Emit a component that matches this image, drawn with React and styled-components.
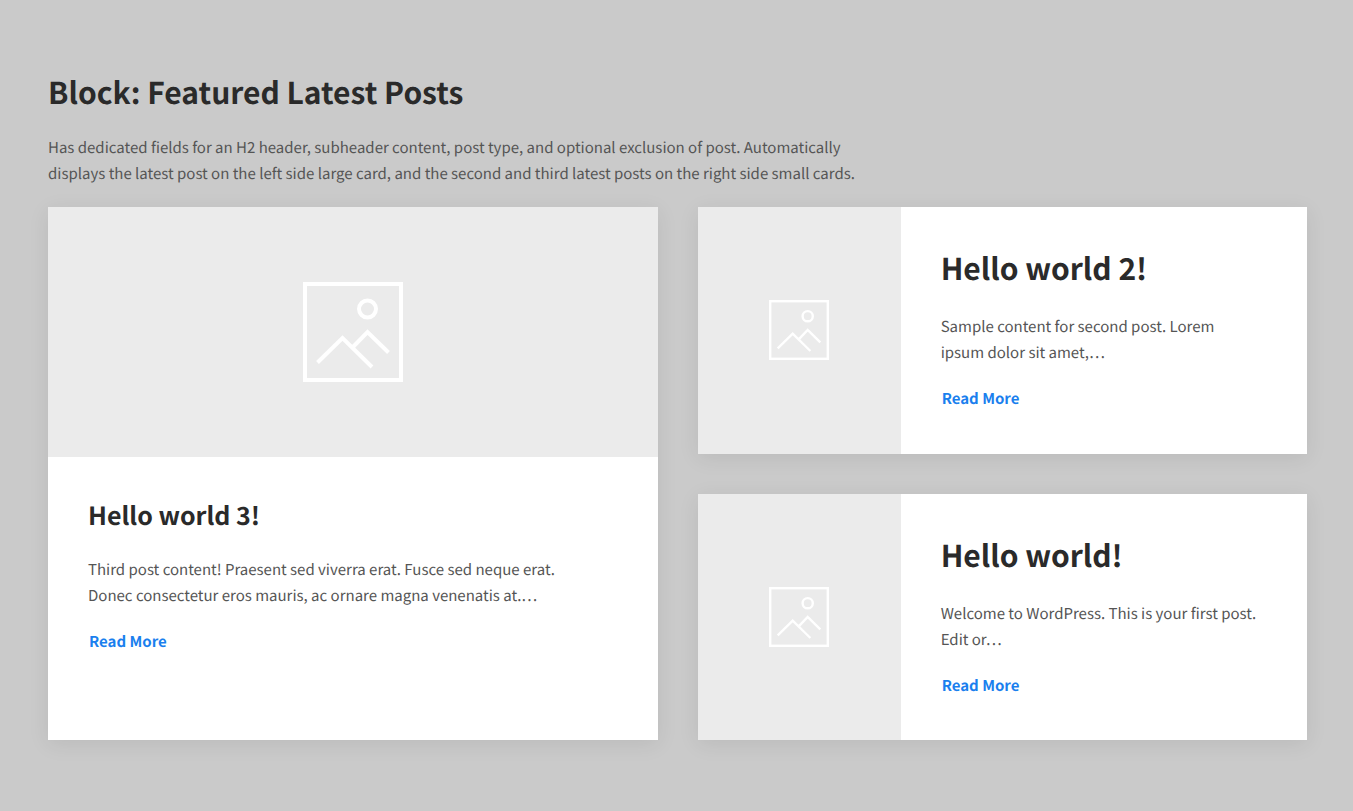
import React from "react";
import styled, { createGlobalStyle } from "styled-components";

const GlobalStyle = createGlobalStyle`
  *, *::before, *::after { box-sizing: border-box; }
  body {
    margin: 0;
    background: #cacaca;
    color: #555;
    font-family: "Noto Sans CJK SC", "Noto Sans", sans-serif;
    font-size: 15px;
    line-height: 26px;
    text-rendering: geometricPrecision;
  }
`;

const Section = styled.section`
  padding: 69px 46px 71px 48px;
`;

const Title = styled.h2`
  margin: 0 0 22px;
  color: #2a2a2a;
  font-size: 30px;
  line-height: 44px;
  font-weight: 700;
`;

const CardTitle = styled.h3`
  margin: 0 0 ${(p) => (p.$large ? 22 : 25)}px;
  color: #2a2a2a;
  font-size: ${(p) => (p.$large ? 25 : 30)}px;
  line-height: ${(p) => (p.$large ? 40 : 44)}px;
  font-weight: 700;
`;

const Intro = styled.p`
  margin: 0 0 20px;
  max-width: 840px;
`;

const Posts = styled.div`
  display: grid;
  grid-template-columns: 1fr 1fr;
  gap: 40px;
`;

const SidePosts = styled.div`
  display: grid;
  grid-auto-rows: 1fr;
  gap: 40px;
`;

const Card = styled.article`
  display: flex;
  flex-direction: ${(p) => (p.$large ? "column" : "row")};
  min-height: ${(p) => (p.$large ? 533 : 0)}px;
  background: #fff;
  box-shadow: 0 4px 20px rgba(0, 0, 0, 0.08);
`;

const Media = styled.div`
  display: flex;
  align-items: center;
  justify-content: center;
  flex: 0 0 ${(p) => (p.$large ? "250px" : "calc(100% / 3)")};
  background: #ebebeb;
`;

const Icon = styled.svg`
  width: ${(p) => (p.$large ? 100 : 60)}px;
  height: ${(p) => (p.$large ? 100 : 60)}px;
  fill: none;
  stroke: #fff;
  stroke-width: 4;
`;

const Body = styled.div`
  flex: 1;
  min-width: 0;
  padding: 38px 40px;
`;

const Excerpt = styled.p`
  margin: 0 0 20px;
  max-width: ${(p) => (p.$large ? 500 : 318)}px;
`;

const ReadMore = styled.a`
  display: inline-block;
  padding: 0 1px;
  color: #1a7fee;
  font-weight: 700;
  text-decoration: none;
  vertical-align: top;
`;

function Post({ large, title, excerpt }) {
  return (
    <Card $large={large}>
      <Media $large={large}>
        <Icon $large={large} viewBox="0 0 100 100" aria-hidden="true">
          <rect x="2" y="2" width="96" height="96" />
          <circle cx="64.5" cy="27" r="8.5" />
          <path d="M14.5 80.5 39.5 56 69 85M49.5 65.5 64.5 50 85.5 70.5" />
        </Icon>
      </Media>
      <Body>
        <CardTitle $large={large}>{title}</CardTitle>
        <Excerpt $large={large}>{excerpt}</Excerpt>
        <ReadMore href="#">Read More</ReadMore>
      </Body>
    </Card>
  );
}

export default function App() {
  return (
    <>
      <GlobalStyle />
      <Section>
        <Title>Block: Featured Latest Posts</Title>
        <Intro>
          Has dedicated fields for an H2 header, subheader content, post type, and optional
          exclusion of post. Automatically displays the latest post on the left side large card,
          and the second and third latest posts on the right side small cards.
        </Intro>
        <Posts>
          <Post
            large
            title="Hello world 3!"
            excerpt="Third post content! Praesent sed viverra erat. Fusce sed neque erat. Donec consectetur eros mauris, ac ornare magna venenatis at.…"
          />
          <SidePosts>
            <Post
              title="Hello world 2!"
              excerpt="Sample content for second post. Lorem ipsum dolor sit amet,…"
            />
            <Post
              title="Hello world!"
              excerpt="Welcome to WordPress. This is your first post. Edit or…"
            />
          </SidePosts>
        </Posts>
      </Section>
    </>
  );
}
